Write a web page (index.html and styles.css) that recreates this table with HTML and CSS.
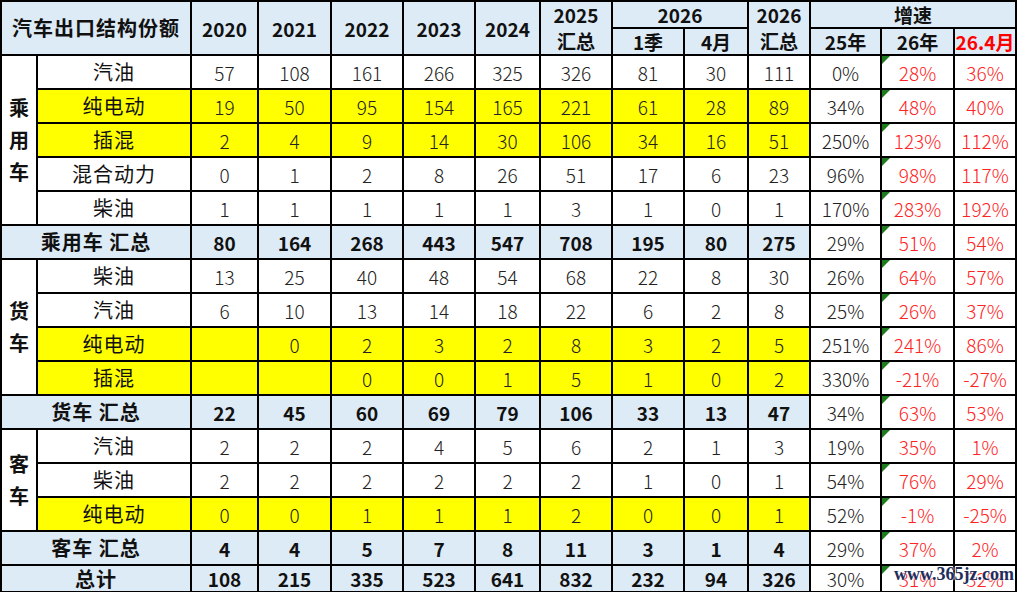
FILE: index.html
```html
<!DOCTYPE html>
<html lang="zh">
<head>
<meta charset="utf-8">
<title>汽车出口结构份额</title>
<link rel="stylesheet" href="styles.css">
</head>
<body>
<div class="wrap">
<table class="sheet">
  <colgroup>
    <col class="c-grp"><col class="c-lbl"><col class="c-67"><col class="c-73"><col class="c-72"><col class="c-72"><col class="c-65"><col class="c-72"><col class="c-72"><col class="c-64"><col class="c-62"><col class="c-71"><col class="c-73"><col class="c-60">
  </colgroup>
  <thead>
    <tr class="h1">
      <th colspan="2" rowspan="2" class="title">汽车出口结构份额</th>
      <th rowspan="2">2020</th>
      <th rowspan="2">2021</th>
      <th rowspan="2">2022</th>
      <th rowspan="2">2023</th>
      <th rowspan="2">2024</th>
      <th rowspan="2" class="two">2025<br>汇总</th>
      <th colspan="2">2026</th>
      <th rowspan="2" class="two">2026<br>汇总</th>
      <th colspan="3">增速</th>
    </tr>
    <tr class="h2">
      <th>1季</th>
      <th>4月</th>
      <th>25年</th>
      <th>26年</th>
      <th class="red">26.4月</th>
    </tr>
  </thead>
  <tbody>
    <tr>
      <th rowspan="5" class="grp">乘<br>用<br>车</th>
      <td class="lbl">汽油</td><td>57</td><td>108</td><td>161</td><td>266</td><td>325</td><td>326</td><td>81</td><td>30</td><td>111</td><td class="g">0%</td><td class="g r t">28%</td><td class="g r">36%</td>
    </tr>
    <tr class="y">
      <td class="lbl">纯电动</td><td>19</td><td>50</td><td>95</td><td>154</td><td>165</td><td>221</td><td>61</td><td>28</td><td>89</td><td class="g">34%</td><td class="g r t">48%</td><td class="g r">40%</td>
    </tr>
    <tr class="y">
      <td class="lbl">插混</td><td>2</td><td>4</td><td>9</td><td>14</td><td>30</td><td>106</td><td>34</td><td>16</td><td>51</td><td class="g">250%</td><td class="g r t">123%</td><td class="g r">112%</td>
    </tr>
    <tr>
      <td class="lbl">混合动力</td><td>0</td><td>1</td><td>2</td><td>8</td><td>26</td><td>51</td><td>17</td><td>6</td><td>23</td><td class="g">96%</td><td class="g r t">98%</td><td class="g r">117%</td>
    </tr>
    <tr>
      <td class="lbl">柴油</td><td>1</td><td>1</td><td>1</td><td>1</td><td>1</td><td>3</td><td>1</td><td>0</td><td>1</td><td class="g">170%</td><td class="g r t">283%</td><td class="g r">192%</td>
    </tr>
    <tr class="sum">
      <th colspan="2">乘用车 汇总</th><td>80</td><td>164</td><td>268</td><td>443</td><td>547</td><td>708</td><td>195</td><td>80</td><td>275</td><td class="g">29%</td><td class="g r t">51%</td><td class="g r">54%</td>
    </tr>
    <tr>
      <th rowspan="4" class="grp">货<br>车</th>
      <td class="lbl">柴油</td><td>13</td><td>25</td><td>40</td><td>48</td><td>54</td><td>68</td><td>22</td><td>8</td><td>30</td><td class="g">26%</td><td class="g r t">64%</td><td class="g r">57%</td>
    </tr>
    <tr>
      <td class="lbl">汽油</td><td>6</td><td>10</td><td>13</td><td>14</td><td>18</td><td>22</td><td>6</td><td>2</td><td>8</td><td class="g">25%</td><td class="g r t">26%</td><td class="g r">37%</td>
    </tr>
    <tr class="y">
      <td class="lbl">纯电动</td><td></td><td>0</td><td>2</td><td>3</td><td>2</td><td>8</td><td>3</td><td>2</td><td>5</td><td class="g">251%</td><td class="g r t">241%</td><td class="g r">86%</td>
    </tr>
    <tr class="y">
      <td class="lbl">插混</td><td></td><td></td><td>0</td><td>0</td><td>1</td><td>5</td><td>1</td><td>0</td><td>2</td><td class="g">330%</td><td class="g r t">-21%</td><td class="g r">-27%</td>
    </tr>
    <tr class="sum">
      <th colspan="2">货车 汇总</th><td>22</td><td>45</td><td>60</td><td>69</td><td>79</td><td>106</td><td>33</td><td>13</td><td>47</td><td class="g">34%</td><td class="g r t">63%</td><td class="g r">53%</td>
    </tr>
    <tr>
      <th rowspan="3" class="grp">客<br>车</th>
      <td class="lbl">汽油</td><td>2</td><td>2</td><td>2</td><td>4</td><td>5</td><td>6</td><td>2</td><td>1</td><td>3</td><td class="g">19%</td><td class="g r t">35%</td><td class="g r">1%</td>
    </tr>
    <tr>
      <td class="lbl">柴油</td><td>2</td><td>2</td><td>2</td><td>2</td><td>2</td><td>2</td><td>1</td><td>0</td><td>1</td><td class="g">54%</td><td class="g r t">76%</td><td class="g r">29%</td>
    </tr>
    <tr class="y">
      <td class="lbl">纯电动</td><td>0</td><td>0</td><td>1</td><td>1</td><td>1</td><td>2</td><td>0</td><td>0</td><td>1</td><td class="g">52%</td><td class="g r t">-1%</td><td class="g r">-25%</td>
    </tr>
    <tr class="sum">
      <th colspan="2">客车 汇总</th><td>4</td><td>4</td><td>5</td><td>7</td><td>8</td><td>11</td><td>3</td><td>1</td><td>4</td><td class="g">29%</td><td class="g r t">37%</td><td class="g r">2%</td>
    </tr>
    <tr class="sum last">
      <th colspan="2">总计</th><td>108</td><td>215</td><td>335</td><td>523</td><td>641</td><td>832</td><td>232</td><td>94</td><td>326</td><td class="g">30%</td><td class="g r t">31%</td><td class="g r">32%</td>
    </tr>
  </tbody>
</table>
<div class="watermark">www.365jz.com</div>
</div>
</body>
</html>
```

FILE: styles.css
```css
html, body {
  margin: 0;
  padding: 0;
  background: #fff;
}

.wrap {
  position: relative;
  width: 1017px;
  height: 592px;
  overflow: hidden;
}

.sheet {
  border-collapse: collapse;
  table-layout: fixed;
  width: 1015px;
  font-family: "Noto Sans CJK SC", "Noto Sans", sans-serif;
  font-size: 19px;
  font-weight: 300;
  color: #222;
}

.c-grp { width: 36px; }
.c-lbl { width: 154px; }
.c-67 { width: 67px; }
.c-73 { width: 73px; }
.c-72 { width: 72px; }
.c-65 { width: 65px; }
.c-64 { width: 64px; }
.c-62 { width: 62px; }
.c-71 { width: 71px; }
.c-60 { width: 62px; }

.sheet th,
.sheet td {
  border: 2px solid #000;
  padding: 0;
  text-align: center;
  vertical-align: middle;
  line-height: 1;
  white-space: nowrap;
  overflow: hidden;
}

.sheet thead th {
  background: #ddebf7;
  font-weight: 700;
  color: #111;
}

.h1 { height: 27px; }
.h2 { height: 27px; }

.sheet thead .title {
  font-size: 20px;
  letter-spacing: 1px;
}

.sheet thead .two {
  line-height: 26px;
}

.sheet thead .red {
  color: #ff0000;
}

.sheet tbody tr {
  height: 34px;
}

.sheet tbody tr.last {
  height: 27px;
}

.sheet .grp {
  background: #fff;
  font-size: 20px;
  font-weight: 700;
  line-height: 32px;
  color: #111;
}

.sheet .lbl {
  font-size: 20px;
  letter-spacing: 1px;
  font-weight: 400;
  color: #111;
}

.sheet tr.y td {
  background: #ffff00;
}

.sheet tr.sum th,
.sheet tr.sum td {
  background: #ddebf7;
  font-weight: 700;
  color: #111;
}

.sheet tr.sum th {
  font-size: 20px;
  letter-spacing: 1px;
}

.sheet tr td.g,
.sheet tr.sum td.g,
.sheet tr.y td.g {
  background: #fff;
  font-weight: 300;
  color: #222;
}

.sheet tr td.r,
.sheet tr.sum td.r,
.sheet tr.y td.r {
  color: #ff2424;
}

.sheet td.t {
  position: relative;
}

.sheet td.t::before {
  content: "";
  position: absolute;
  left: 0;
  top: 0;
  width: 0;
  height: 0;
  border-top: 8px solid #1e7b1e;
  border-right: 8px solid transparent;
}

.watermark {
  position: absolute;
  left: 894px;
  top: 564px;
  font-family: "Liberation Serif", "DejaVu Serif", serif;
  font-weight: 700;
  font-size: 18px;
  color: #1f2d5c;
  text-shadow: 0 0 2px #fff, 0 0 2px #fff;
  letter-spacing: 0;
}
```
